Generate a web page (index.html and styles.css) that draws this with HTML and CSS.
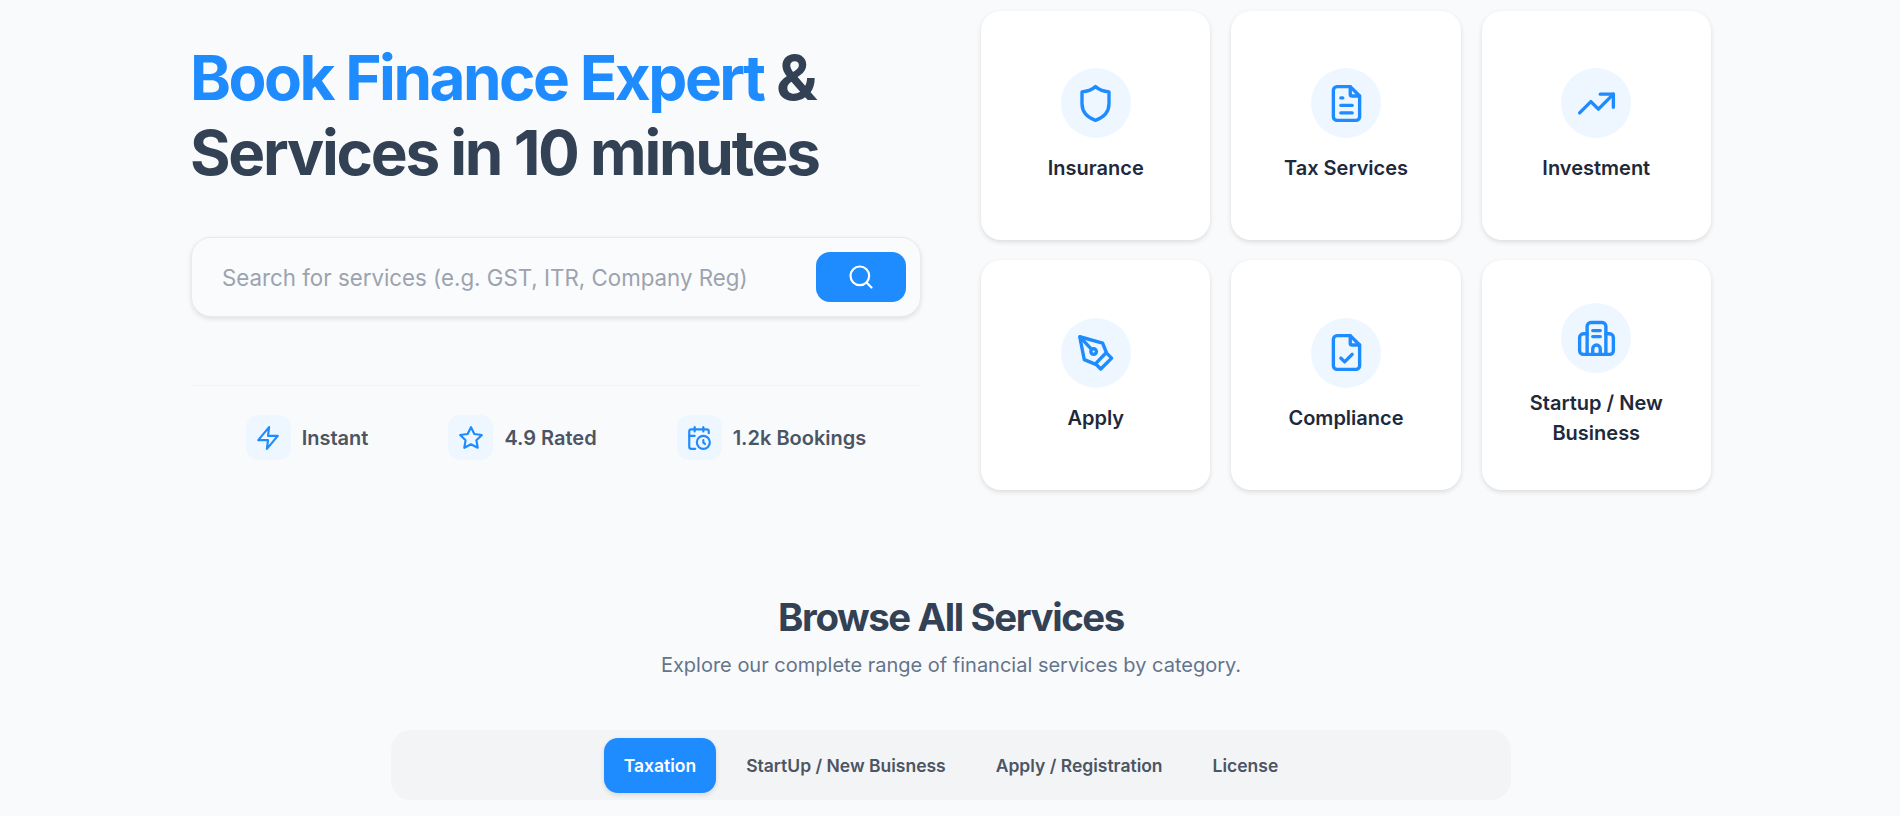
FILE: index.html

```html
<!DOCTYPE html>
<html lang="en">
<head>
    <meta charset="UTF-8">
    <meta name="viewport" content="width=device-width, initial-scale=1.0">
    <title>Book Finance Expert</title>
    <link rel="stylesheet" href="styles.css">
</head>
<body>
    <section class="hero">
        <div class="hero-left">
            <h1><span class="accent">Book Finance Expert</span> &amp;<br>Services in 10 minutes</h1>

            <form class="search">
                <input type="text" placeholder="Search for services (e.g. GST, ITR, Company Reg)">
                <button type="button" aria-label="Search">
                    <svg viewBox="0 0 24 24"><circle cx="11" cy="11" r="8"/><path d="M21 21l-4.3-4.3"/></svg>
                </button>
            </form>

            <div class="stats">
                <div class="stat">
                    <span class="stat-icon"><svg viewBox="0 0 24 24"><path d="M13 2 3 14h9l-1 8 10-12h-9l1-8z"/></svg></span>
                    Instant
                </div>
                <div class="stat">
                    <span class="stat-icon"><svg viewBox="0 0 24 24"><path d="M12 2l3.09 6.26L22 9.27l-5 4.87 1.18 6.88L12 17.77l-6.18 3.25L7 14.14 2 9.27l6.91-1.01L12 2z"/></svg></span>
                    4.9 Rated
                </div>
                <div class="stat">
                    <span class="stat-icon"><svg viewBox="0 0 24 24"><path d="M21 7.5V6a2 2 0 0 0-2-2H5a2 2 0 0 0-2 2v14a2 2 0 0 0 2 2h3.5"/><path d="M16 2v4"/><path d="M8 2v4"/><path d="M3 10h5"/><path d="M17.5 17.5 16 16.3V14"/><circle cx="16" cy="16" r="6"/></svg></span>
                    1.2k Bookings
                </div>
            </div>
        </div>

        <div class="cards">
            <a class="card">
                <span class="card-icon"><svg viewBox="0 0 24 24"><path d="M12 3c2 1.700 4.200 2.600 7.200 2.800V12c0 4.500-3 7.500-7.200 9-4.200-1.500-7.200-4.500-7.200-9V5.800c3-.2 5.200-1.100 7.200-2.800z"/></svg></span>
                <span class="card-label">Insurance</span>
            </a>
            <a class="card">
                <span class="card-icon"><svg viewBox="0 0 24 24"><path d="M14 3v4a1 1 0 0 0 1 1h4"/><path d="M17 21H7a2 2 0 0 1-2-2V5a2 2 0 0 1 2-2h7l5 5v11a2 2 0 0 1-2 2z"/><path d="M9 9h1"/><path d="M9 13h6"/><path d="M9 17h6"/></svg></span>
                <span class="card-label">Tax Services</span>
            </a>
            <a class="card">
                <span class="card-icon"><svg viewBox="0 0 24 24"><path d="M3 17l6-6 4 4 8-8"/><path d="M14 7h7v7"/></svg></span>
                <span class="card-label">Investment</span>
            </a>
            <a class="card">
                <span class="card-icon"><svg viewBox="0 0 24 24"><path d="M3.600 3.600 15.800 7l2 5-6 6.200-5.800-2.400z"/><path d="M17.800 12.200l2.800 2.800-5.800 5.800-2.800-2.800"/><path d="M3.800 3.800l6 6.400"/><circle cx="11" cy="11.500" r="1.500"/></svg></span>
                <span class="card-label">Apply</span>
            </a>
            <a class="card">
                <span class="card-icon"><svg viewBox="0 0 24 24"><path d="M14 3v4a1 1 0 0 0 1 1h4"/><path d="M17 21H7a2 2 0 0 1-2-2V5a2 2 0 0 1 2-2h7l5 5v11a2 2 0 0 1-2 2z"/><path d="M9 15l2 2 4-4"/></svg></span>
                <span class="card-label">Compliance</span>
            </a>
            <a class="card">
                <span class="card-icon"><svg viewBox="0 0 24 24"><path d="M7 21V6a2 2 0 0 1 2-2h6a2 2 0 0 1 2 2v15"/><path d="M7 10H5a2 2 0 0 0-2 2v7a2 2 0 0 0 2 2h14a2 2 0 0 0 2-2v-7a2 2 0 0 0-2-2h-2"/><path d="M10 8.300h4"/><path d="M10 11.500h4"/><path d="M10 21v-3a2 2 0 0 1 4 0v3"/></svg></span>
                <span class="card-label">Startup / New Business</span>
            </a>
        </div>
    </section>

    <section class="browse">
        <h2>Browse All Services</h2>
        <p>Explore our complete range of financial services by category.</p>

        <div class="tabs">
            <button class="tab active">Taxation</button>
            <button class="tab">StartUp / New Buisness</button>
            <button class="tab">Apply / Registration</button>
            <button class="tab">License</button>
        </div>
    </section>
</body>
</html>
```

FILE: styles.css

```css
* {
    box-sizing: border-box;
}
html, body {
    height: 816px;
    overflow: hidden;
}
body {
    margin: 0;
    padding-left: 2px;
    background-color: #f9fafc;
    font-family: Inter, "Noto Sans", sans-serif;
    color: #334155;
}
svg {
    display: block;
    fill: none;
    stroke: #1e8bff;
    stroke-linecap: round;
    stroke-linejoin: round;
}
.hero {
    width: 1520px;
    margin: 0 auto;
    padding-top: 11px;
    display: grid;
    grid-template-columns: 730px 730px;
    column-gap: 60px;
}
.hero-left {
    padding-top: 29px;
}
h1 {
    margin: 0 0 0 -1px;
    font-size: 62px;
    line-height: 75px;
    font-weight: 700;
    letter-spacing: -2.250px;
}
.accent {
    color: #1e8bff;
    letter-spacing: -2.500px;
}
.search {
    margin-top: 47px;
    height: 80px;
    padding: 0 14px 0 28px;
    display: flex;
    align-items: center;
    background-color: #fafbfd;
    border: 1px solid #e8eaee;
    border-radius: 20px;
    box-shadow: 0 2px 5px rgba(0, 0, 0, 0.1);
}
.search input {
    flex: 1;
    min-width: 0;
    border: none;
    outline: none;
    background: transparent;
    font-family: inherit;
    font-size: 22.300px;
    color: #334155;
}
.search input::placeholder {
    color: #9ca3af;
}
.search button {
    width: 90px;
    height: 50px;
    display: flex;
    align-items: center;
    justify-content: center;
    background-color: #1e8bff;
    border: none;
    border-radius: 14px;
}
.search svg {
    width: 28px;
    height: 28px;
    stroke: #fff;
    stroke-width: 1.9;
}
.stats {
    margin-top: 68px;
    padding-top: 29px;
    display: flex;
    justify-content: center;
    gap: 80px;
    border-top: 1px solid #f1f3f6;
}
.stat {
    display: flex;
    align-items: center;
    gap: 11px;
    font-size: 20px;
    font-weight: 600;
    color: #4b5563;
}
.stat-icon {
    width: 45px;
    height: 45px;
    display: flex;
    align-items: center;
    justify-content: center;
    background-color: #eef7ff;
    border-radius: 12px;
}
.stat-icon svg {
    width: 26px;
    height: 26px;
    stroke-width: 2;
}
.cards {
    display: grid;
    grid-template-columns: repeat(3, 1fr);
    grid-auto-rows: 229.470px;
    gap: 20px 20.800px;
}
.card {
    padding: 0 20px;
    display: flex;
    flex-direction: column;
    align-items: center;
    justify-content: center;
    gap: 15px;
    background-color: #fff;
    border-radius: 20px;
    box-shadow: 0 2px 5px rgba(0, 0, 0, 0.12);
    text-align: center;
}
.card-icon {
    width: 70px;
    height: 70px;
    display: flex;
    align-items: center;
    justify-content: center;
    background-color: #eef7ff;
    border-radius: 50%;
}
.card-icon svg {
    width: 45px;
    height: 45px;
    stroke-width: 1.8;
}
.card-label {
    font-size: 20px;
    line-height: 30px;
    font-weight: 600;
    color: #1e293b;
}
.browse {
    padding-top: 101.800px;
    text-align: center;
}
h2 {
    margin: 0;
    font-size: 38.400px;
    line-height: 50px;
    font-weight: 700;
    letter-spacing: -1.400px;
}
.browse p {
    margin: 8px 0 0;
    font-size: 20px;
    line-height: 30px;
    color: #64748b;
}
.tabs {
    width: 1120px;
    height: 70px;
    margin: 50.300px auto 0;
    display: flex;
    align-items: center;
    justify-content: center;
    gap: 10px;
    background-color: #f3f4f6;
    border-radius: 20px;
}
.tab {
    height: 55px;
    padding: 0 20px;
    background: none;
    border: none;
    border-radius: 14px;
    font-family: inherit;
    font-size: 17.500px;
    font-weight: 600;
    color: #4b5563;
}
.tab.active {
    background-color: #1e8bff;
    color: #fff;
    box-shadow: 0 2px 5px rgba(0, 0, 0, 0.12);
}
```
